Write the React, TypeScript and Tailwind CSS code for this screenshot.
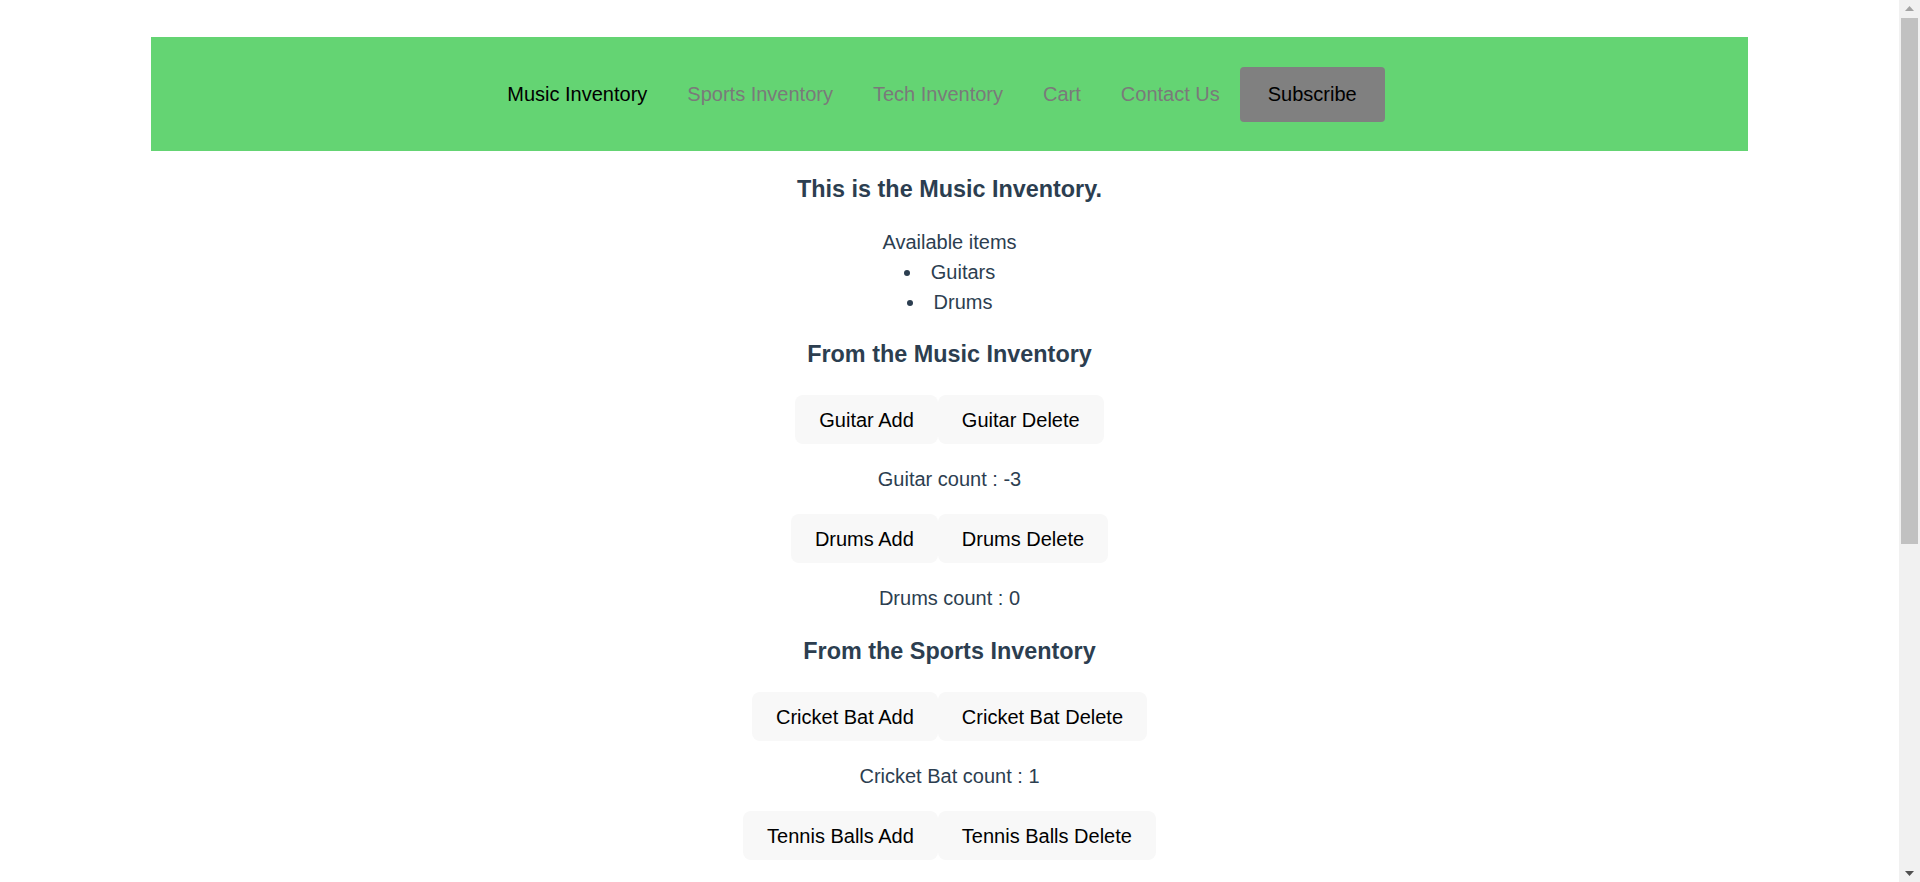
import { useState } from "react";

const links = ["Music Inventory", "Sports Inventory", "Tech Inventory", "Cart", "Contact Us"];

function ItemControls({ name, count, onAdd, onDelete }: { name: string; count: number; onAdd: () => void; onDelete: () => void }) {
  return (
    <>
      <div className="flex justify-center">
        <button onClick={onAdd} className="h-[49px] px-6 rounded-lg bg-[#f8f8f8] text-black text-[20px] leading-[24px]">
          {name} Add
        </button>
        <button onClick={onDelete} className="h-[49px] px-6 rounded-lg bg-[#f8f8f8] text-black text-[20px] leading-[24px]">
          {name} Delete
        </button>
      </div>
      <p className="my-5 leading-[30px]">
        {name} count : {count}
      </p>
    </>
  );
}

// browser-style scrollbar on the right edge
function Scrollbar() {
  return (
    <div className="w-[21px] shrink-0 bg-[#f1f1f1] flex flex-col">
      <div className="h-[17px] flex items-center justify-center">
        <svg width="9" height="5" viewBox="0 0 9 5">
          <path d="M0 5 L4.5 0 L9 5 Z" fill="#a3a3a3" />
        </svg>
      </div>
      <div className="mt-px mx-[2px] h-[526px] bg-[#c1c1c1]" />
      <div className="flex-1" />
      <div className="h-[17px] flex items-center justify-center">
        <svg width="9" height="5" viewBox="0 0 9 5">
          <path d="M0 0 L9 0 L4.5 5 Z" fill="#505050" />
        </svg>
      </div>
    </div>
  );
}

export default function App() {
  const [guitars, setGuitars] = useState(-3);
  const [drums, setDrums] = useState(0);
  const [bats, setBats] = useState(1);
  const [balls, setBalls] = useState(0);

  return (
    <div className="flex h-[882px] w-full overflow-hidden bg-white text-[20px] text-[#2c3e50] font-['Liberation_Sans',Arial,sans-serif]">
      <div className="flex-1 overflow-y-auto [scrollbar-width:none]">
        <nav className="mx-auto mt-[37px] h-[114px] w-[84.1%] bg-[#64d473] flex items-center justify-center">
          {links.map((l, i) => (
            <a
              key={l}
              href="#"
              className={"px-5 leading-[23px] " + (i === 0 ? "text-black" : "text-[#7a7a7a]")}
            >
              {l}
            </a>
          ))}
          <button className="mr-[27px] h-[55px] px-7 rounded bg-[#808080] text-black leading-[23px]">Subscribe</button>
        </nav>

        <main className="text-center pb-[300px]">
          <h3 className="mt-[25px] mb-6 text-[23.4px] leading-[27px] font-bold">This is the Music Inventory.</h3>
          <div className="leading-[30px]">
            Available items
            <ul className="list-disc list-inside">
              <li>Guitars</li>
              <li>Drums</li>
            </ul>
          </div>

          <h3 className="mt-6 mb-[27px] text-[23.4px] leading-[27px] font-bold">From the Music Inventory</h3>
          <ItemControls name="Guitar" count={guitars} onAdd={() => setGuitars(guitars + 1)} onDelete={() => setGuitars(guitars - 1)} />
          <ItemControls name="Drums" count={drums} onAdd={() => setDrums(drums + 1)} onDelete={() => setDrums(drums - 1)} />

          <h3 className="mt-[25px] mb-[27px] text-[23.4px] leading-[27px] font-bold">From the Sports Inventory</h3>
          <ItemControls name="Cricket Bat" count={bats} onAdd={() => setBats(bats + 1)} onDelete={() => setBats(bats - 1)} />
          <ItemControls name="Tennis Balls" count={balls} onAdd={() => setBalls(balls + 1)} onDelete={() => setBalls(balls - 1)} />
        </main>
      </div>
      <Scrollbar />
    </div>
  );
}
